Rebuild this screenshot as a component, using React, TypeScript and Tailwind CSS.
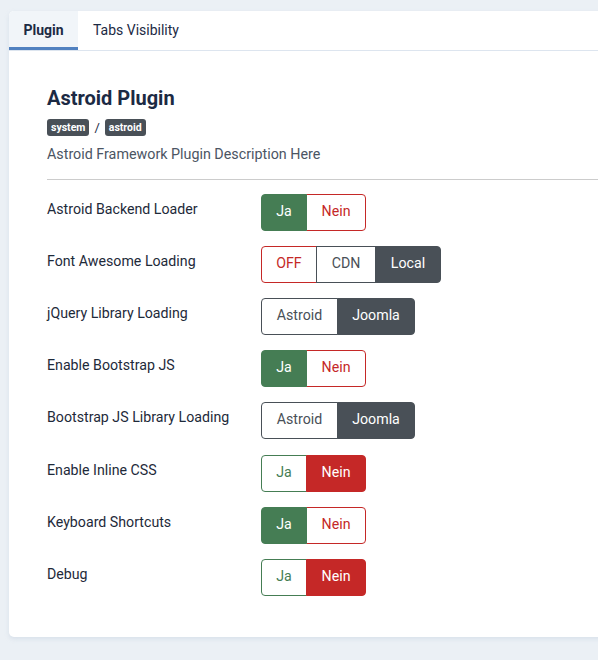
import React from 'react';

type Opt = { label: string; tone: 'green' | 'red' | 'dark' };
type Field = { label: string; options: Opt[]; active: number };

const fields: Field[] = [
  { label: 'Astroid Backend Loader', options: [{ label: 'Ja', tone: 'green' }, { label: 'Nein', tone: 'red' }], active: 0 },
  {
    label: 'Font Awesome Loading',
    options: [{ label: 'OFF', tone: 'red' }, { label: 'CDN', tone: 'dark' }, { label: 'Local', tone: 'dark' }],
    active: 2,
  },
  { label: 'jQuery Library Loading', options: [{ label: 'Astroid', tone: 'dark' }, { label: 'Joomla', tone: 'dark' }], active: 1 },
  { label: 'Enable Bootstrap JS', options: [{ label: 'Ja', tone: 'green' }, { label: 'Nein', tone: 'red' }], active: 0 },
  { label: 'Bootstrap JS Library Loading', options: [{ label: 'Astroid', tone: 'dark' }, { label: 'Joomla', tone: 'dark' }], active: 1 },
  { label: 'Enable Inline CSS', options: [{ label: 'Ja', tone: 'green' }, { label: 'Nein', tone: 'red' }], active: 1 },
  { label: 'Keyboard Shortcuts', options: [{ label: 'Ja', tone: 'green' }, { label: 'Nein', tone: 'red' }], active: 0 },
  { label: 'Debug', options: [{ label: 'Ja', tone: 'green' }, { label: 'Nein', tone: 'red' }], active: 1 },
];

// widths include the 1px overlap of the shared border
const widths: Record<string, string> = {
  Ja: 'w-[46px]',
  Nein: 'w-[60px]',
  OFF: 'w-[56px]',
  CDN: 'w-[60px]',
  Local: 'w-[66px]',
  Astroid: 'w-[77px]',
  Joomla: 'w-[78px]',
};

const toneClass = (tone: Opt['tone'], on: boolean) => {
  if (tone === 'green') return on ? 'bg-[#457d54] border-[#457d54] text-white' : 'bg-white border-[#457d54] text-[#457d54]';
  if (tone === 'red') return on ? 'bg-[#c52827] border-[#c52827] text-white' : 'bg-white border-[#c52827] text-[#c52827]';
  return on ? 'bg-[#495057] border-[#495057] text-white' : 'bg-white border-[#495057] text-[#495057]';
};

function ButtonGroup({ options, active }: { options: Opt[]; active: number }) {
  return (
    <div className="flex">
      {options.map((o, i) => (
        <div
          key={o.label}
          className={`h-[37px] flex items-center justify-center border text-[14.2px] ${widths[o.label]} ${toneClass(o.tone, i === active)} ${
            i === 0 ? 'rounded-l-[4px]' : '-ml-px'
          } ${i === options.length - 1 ? 'rounded-r-[4px]' : ''} ${i === active ? 'relative z-10' : ''}`}
        >
          {o.label}
        </div>
      ))}
    </div>
  );
}

export default function App() {
  return (
    <div className="min-h-[660px] bg-[#ebf0f5] pt-[11px] pl-[9px] overflow-hidden" style={{ fontFamily: 'Roboto, "Liberation Sans", sans-serif' }}>
      <div className="w-[620px] h-[626px] bg-white rounded-l-[5px] shadow-[0_2px_4px_rgba(180,195,215,0.35)]">
        <div className="flex border-b border-[#dde5ef] h-[40px] text-[14px] text-[#1c2a44]">
          <div className="w-[69px] flex items-center justify-center bg-[#f1f5f9] font-bold border-b-[3px] border-[#5181c0] pt-[3px] rounded-tl-[5px]">
            Plugin
          </div>
          <div className="px-[15px] flex items-center">Tabs Visibility</div>
        </div>

        <div className="pl-[38px] pt-[35px]">
          <h1 className="text-[20px] font-bold text-[#1c2a44] leading-[24px]">Astroid Plugin</h1>
          <div className="flex items-center gap-[5px] mt-[8px] text-[#1c2a44]">
            <span className="bg-[#495057] text-white text-[10.5px] font-bold rounded-[3px] px-[4px] h-[17px] flex items-center">system</span>
            <span className="text-[13px]">/</span>
            <span className="bg-[#495057] text-white text-[10.5px] font-bold rounded-[3px] px-[4px] h-[17px] flex items-center">astroid</span>
          </div>
          <p className="text-[14.3px] text-[#4b5563] mt-[6px] leading-[20px]">Astroid Framework Plugin Description Here</p>
          <div className="border-t border-[#cccccc] mt-[15px]" />

          <div className="pt-[14px] flex flex-col">
            {fields.map((f, i) => (
              <div key={f.label} className={`flex ${i === 0 ? '' : i === 5 ? 'mt-[16px]' : 'mt-[15px]'}`}>
                <div className="w-[214px] text-[14.2px] text-[#1e2a3a] pt-[7px] leading-[16px]">{f.label}</div>
                <ButtonGroup options={f.options} active={f.active} />
              </div>
            ))}
          </div>
        </div>
      </div>
    </div>
  );
}
